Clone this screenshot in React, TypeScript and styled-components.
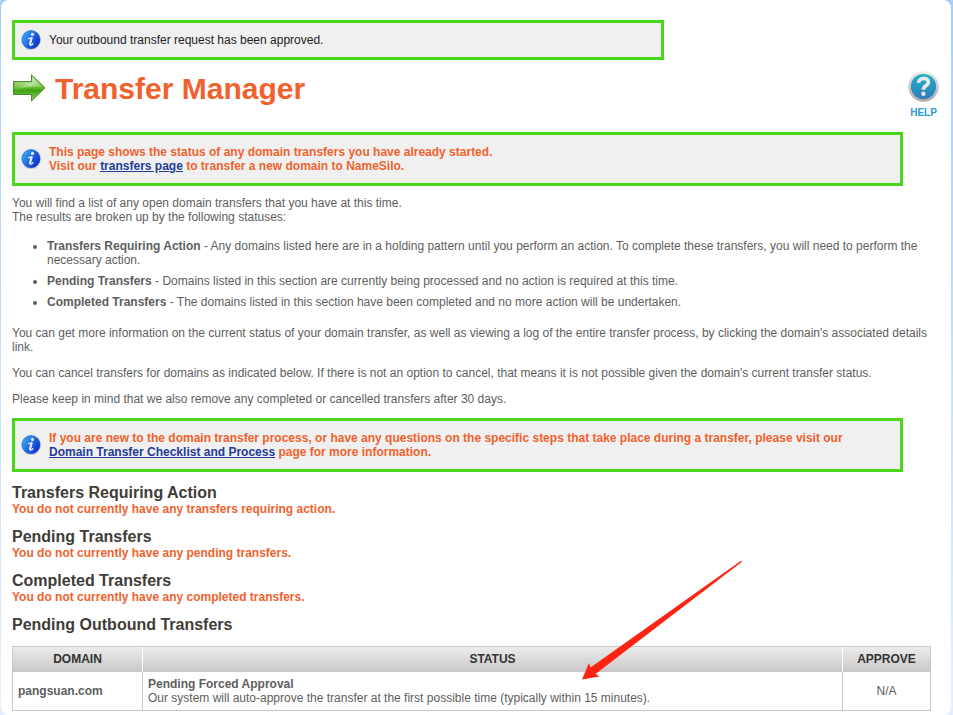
import React from "react";
import styled, { createGlobalStyle } from "styled-components";

const GlobalStyle = createGlobalStyle`
  *, *::before, *::after { box-sizing: border-box; }
  html { min-height: 100%; background: linear-gradient(#a8cef7, #e1f0ff); }
  body {
    margin: 0;
    font: 12px/14px "Liberation Sans", Arial, sans-serif;
    color: #5e5e5e;
  }
  p, h1, h2, ul { margin: 0; padding: 0; }
`;

const Card = styled.main`
  margin: 0 2px 0 1px;
  padding: 20px 12px 4px 11px;
  background: #fff;
  border-radius: 8px;
`;

const Body = styled.div`
  padding-right: 8px;
`;

const Notice = styled.div<{ $width: string; $tone?: "plain" | "accent" }>`
  display: flex;
  align-items: center;
  gap: 8px;
  width: ${(p) => p.$width};
  padding: ${(p) => (p.$tone === "plain" ? "7px 6px" : "10px 6px")};
  border: 3px solid #4bd51b;
  background: #f0f0f0;
  color: ${(p) => (p.$tone === "plain" ? "#222" : "#f0622d")};
  font-weight: ${(p) => (p.$tone === "plain" ? "normal" : "bold")};
`;

const IconSlot = styled.svg`
  display: block;
  flex: none;
`;

const TextLink = styled.a`
  color: #1f3d99;
  text-decoration: underline;
`;

const Header = styled.header`
  display: flex;
  align-items: flex-start;
  justify-content: space-between;
  padding: 11px 0 13px;
`;

const TitleGroup = styled.div`
  display: flex;
  align-items: center;
  gap: 8px;
`;

const Title = styled.h1`
  font-size: 30px;
  line-height: 36px;
  color: #f0622d;
`;

const HelpLink = styled.a`
  display: flex;
  flex-direction: column;
  align-items: center;
  gap: 5px;
  color: #2a9bd6;
  font-size: 10px;
  line-height: 12px;
  font-weight: bold;
  text-decoration: none;
`;

const Intro = styled.div`
  display: flex;
  flex-direction: column;
  gap: 12px;
  padding: 10px 0 12px;
`;

const StatusList = styled.ul`
  display: flex;
  flex-direction: column;
  gap: 7px;
  margin: 3px 0 5px;
  padding-left: 35px;
`;

const StatusItem = styled.li`
  display: list-item;
`;

const Section = styled.section`
  position: relative;
  margin-top: 12px;
`;

const SectionTitle = styled.h2`
  font-size: 16px;
  line-height: 18px;
  color: #403c37;
`;

const EmptyNote = styled.p`
  color: #f0622d;
  font-weight: bold;
`;

const Table = styled.table`
  width: 100%;
  margin-top: 12px;
  border: 1px solid #c8c8c8;
  border-spacing: 0;
  table-layout: fixed;
`;

const HeadCell = styled.th<{ $width?: string }>`
  width: ${(p) => p.$width ?? "auto"};
  padding: 5px 5px 6px;
  color: #333;
  background: linear-gradient(#ececec, #c8c8c8);
  & + & { border-left: 1px solid #fff; }
`;

const Cell = styled.td<{ $align?: "left" | "center" }>`
  padding: 5px;
  text-align: ${(p) => p.$align ?? "left"};
  & + & { border-left: 1px solid #c8c8c8; }
`;

const Pointer = styled.svg`
  position: absolute;
  top: -56px;
  right: 188px;
  pointer-events: none;
`;

function InfoIcon() {
  return (
    <IconSlot width="20" height="20" viewBox="0 0 20 20" aria-hidden="true">
      <defs>
        <linearGradient id="infoFill" x1="0" y1="0.2" x2="1" y2="0.8">
          <stop offset="0" stopColor="#3bb0f4" />
          <stop offset="0.5" stopColor="#1c66e2" />
          <stop offset="1" stopColor="#1226c4" />
        </linearGradient>
      </defs>
      <ellipse cx="10" cy="18.6" rx="6" ry="1.2" fill="#d4d4d4" />
      <circle cx="10" cy="9.7" r="9.2" fill="url(#infoFill)" stroke="#2056c0" strokeWidth="0.6" />
      <circle cx="11.5" cy="4.4" r="1.6" fill="#e6ecf4" />
      <path d="M7.6 8.6 L10.8 7.8" fill="none" stroke="#e6ecf4" strokeWidth="1.3" strokeLinecap="round" />
      <path d="M10.6 8 L9.1 14" fill="none" stroke="#e6ecf4" strokeWidth="2.2" strokeLinecap="round" />
      <path d="M9 14.6 Q9.8 16 12 13.8" fill="none" stroke="#e6ecf4" strokeWidth="1.3" strokeLinecap="round" />
    </IconSlot>
  );
}

function ArrowIcon() {
  return (
    <IconSlot width="35" height="30" viewBox="0 0 35 30" aria-hidden="true">
      <defs>
        <linearGradient id="arrowFill" x1="0" y1="0" x2="0" y2="1">
          <stop offset="0" stopColor="#c2e6b0" />
          <stop offset="0.45" stopColor="#6fc03c" />
          <stop offset="0.6" stopColor="#3fa514" />
          <stop offset="1" stopColor="#8fd45c" />
        </linearGradient>
        <linearGradient id="arrowGloss" x1="0" y1="0" x2="1" y2="0">
          <stop offset="0" stopColor="#fff" stopOpacity="0.05" />
          <stop offset="0.6" stopColor="#fff" stopOpacity="0.45" />
          <stop offset="1" stopColor="#fff" stopOpacity="0.1" />
        </linearGradient>
      </defs>
      <path d="M1.5 7.5 H19.5 V0.8 L33 13.8 L19.5 27 V20.5 H1.5 Z" fill="url(#arrowFill)" stroke="#4d8a35" strokeLinejoin="round" />
      <path d="M3 8.5 H20.5 V3.5 L30 13 Q17 11 3 16.5 Z" fill="url(#arrowGloss)" />
    </IconSlot>
  );
}

function HelpIcon() {
  return (
    <IconSlot width="31" height="31" viewBox="0 0 31 31" aria-hidden="true">
      <defs>
        <linearGradient id="helpRim" x1="0" y1="0" x2="0" y2="1">
          <stop offset="0" stopColor="#eeeeee" />
          <stop offset="1" stopColor="#aaa7a5" />
        </linearGradient>
        <linearGradient id="helpFill" x1="0" y1="0" x2="0" y2="1">
          <stop offset="0" stopColor="#20b0c4" />
          <stop offset="0.5" stopColor="#2597c4" />
          <stop offset="1" stopColor="#3279bd" />
        </linearGradient>
      </defs>
      <circle cx="15.5" cy="15.5" r="15.2" fill="url(#helpRim)" />
      <circle cx="15.5" cy="15.5" r="12.6" fill="url(#helpFill)" />
      <path d="M10.6 11.8 C11 5.8 20.4 6 20.4 11.2 C20.4 14.8 15.4 14.4 15.4 18.8" fill="none" stroke="#e8e8e8" strokeWidth="3.7" />
      <circle cx="15.4" cy="22.8" r="2.2" fill="#e8e8e8" />
    </IconSlot>
  );
}

const statuses = [
  {
    name: "Transfers Requiring Action",
    text: "Any domains listed here are in a holding pattern until you perform an action. To complete these transfers, you will need to perform the necessary action.",
  },
  {
    name: "Pending Transfers",
    text: "Domains listed in this section are currently being processed and no action is required at this time.",
  },
  {
    name: "Completed Transfers",
    text: "The domains listed in this section have been completed and no more action will be undertaken.",
  },
];

const emptySections = [
  { title: "Transfers Requiring Action", note: "You do not currently have any transfers requiring action." },
  { title: "Pending Transfers", note: "You do not currently have any pending transfers." },
  { title: "Completed Transfers", note: "You do not currently have any completed transfers." },
];

export default function App() {
  return (
    <>
      <GlobalStyle />
      <Card>
        <Body>
          <Notice $width="71%" $tone="plain" role="status">
            <InfoIcon />
            <p>Your outbound transfer request has been approved.</p>
          </Notice>
        </Body>
        <Header>
          <TitleGroup>
            <ArrowIcon />
            <Title>Transfer Manager</Title>
          </TitleGroup>
          <HelpLink href="#help">
            <HelpIcon />
            HELP
          </HelpLink>
        </Header>
        <Body>
          <Notice $width="97%">
            <InfoIcon />
            <p>
              This page shows the status of any domain transfers you have already started.
              <br />
              Visit our <TextLink href="#transfers">transfers page</TextLink> to transfer a new domain to NameSilo.
            </p>
          </Notice>
          <Intro>
            <p>
              You will find a list of any open domain transfers that you have at this time.
              <br />
              The results are broken up by the following statuses:
            </p>
            <StatusList>
              {statuses.map((s) => (
                <StatusItem key={s.name}>
                  <strong>{s.name}</strong> - {s.text}
                </StatusItem>
              ))}
            </StatusList>
            <p>
              You can get more information on the current status of your domain transfer, as well as viewing a log of
              the entire transfer process, by clicking the domain's associated details link.
            </p>
            <p>
              You can cancel transfers for domains as indicated below. If there is not an option to cancel, that means
              it is not possible given the domain's current transfer status.
            </p>
            <p>Please keep in mind that we also remove any completed or cancelled transfers after 30 days.</p>
          </Intro>
          <Notice $width="97%">
            <InfoIcon />
            <p>
              If you are new to the domain transfer process, or have any questions on the specific steps that take
              place during a transfer, please visit our
              <br />
              <TextLink href="#checklist">Domain Transfer Checklist and Process</TextLink> page for more information.
            </p>
          </Notice>
          {emptySections.map((s) => (
            <Section key={s.title}>
              <SectionTitle>{s.title}</SectionTitle>
              <EmptyNote>{s.note}</EmptyNote>
            </Section>
          ))}
          <Section>
            <SectionTitle>Pending Outbound Transfers</SectionTitle>
            <Table>
              <thead>
                <tr>
                  <HeadCell $width="129px">DOMAIN</HeadCell>
                  <HeadCell>STATUS</HeadCell>
                  <HeadCell $width="88px">APPROVE</HeadCell>
                </tr>
              </thead>
              <tbody>
                <tr>
                  <Cell>
                    <strong>pangsuan.com</strong>
                  </Cell>
                  <Cell>
                    <strong>Pending Forced Approval</strong>
                    <br />
                    Our system will auto-approve the transfer at the first possible time (typically within 15 minutes).
                  </Cell>
                  <Cell $align="center">N/A</Cell>
                </tr>
              </tbody>
            </Table>
            <Pointer width="162" height="122" viewBox="0 0 162 122" aria-hidden="true">
              <path d="M1 119.5 L8 103 L9.5 107.5 L160 0.8 L161 1.8 L14.5 114 L18.5 116.5 Z" fill="#ff2312" />
            </Pointer>
          </Section>
        </Body>
      </Card>
    </>
  );
}
